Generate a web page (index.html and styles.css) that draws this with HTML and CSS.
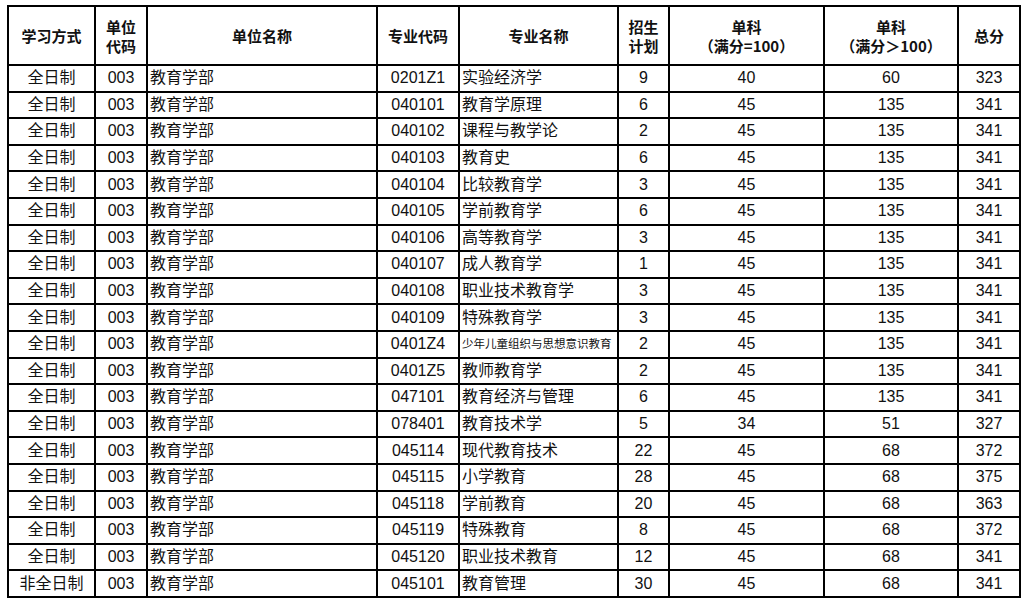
FILE: index.html
```html
<!DOCTYPE html>
<html lang="zh">
<head>
<meta charset="utf-8">
<link rel="stylesheet" href="styles.css">
</head>
<body>
<table class="grid">
<colgroup>
<col class="c1"><col class="c2"><col class="c3"><col class="c4"><col class="c5"><col class="c6"><col class="c7"><col class="c8"><col class="c9">
</colgroup>
<thead>
<tr class="head">
<th>学习方式</th><th><span class="ln">单位</span><span class="ln">代码</span></th><th>单位名称</th><th>专业代码</th><th>专业名称</th><th><span class="ln">招生</span><span class="ln">计划</span></th><th><span class="ln">单科</span><span class="ln">（满分=100）</span></th><th><span class="ln">单科</span><span class="ln">（满分＞100）</span></th><th>总分</th>
</tr>
</thead>
<tbody>
<tr><td>全日制</td><td>003</td><td class="l">教育学部</td><td>0201Z1</td><td class="l">实验经济学</td><td>9</td><td>40</td><td>60</td><td>323</td></tr>
<tr><td>全日制</td><td>003</td><td class="l">教育学部</td><td>040101</td><td class="l">教育学原理</td><td>6</td><td>45</td><td>135</td><td>341</td></tr>
<tr><td>全日制</td><td>003</td><td class="l">教育学部</td><td>040102</td><td class="l">课程与教学论</td><td>2</td><td>45</td><td>135</td><td>341</td></tr>
<tr><td>全日制</td><td>003</td><td class="l">教育学部</td><td>040103</td><td class="l">教育史</td><td>6</td><td>45</td><td>135</td><td>341</td></tr>
<tr><td>全日制</td><td>003</td><td class="l">教育学部</td><td>040104</td><td class="l">比较教育学</td><td>3</td><td>45</td><td>135</td><td>341</td></tr>
<tr><td>全日制</td><td>003</td><td class="l">教育学部</td><td>040105</td><td class="l">学前教育学</td><td>6</td><td>45</td><td>135</td><td>341</td></tr>
<tr><td>全日制</td><td>003</td><td class="l">教育学部</td><td>040106</td><td class="l">高等教育学</td><td>3</td><td>45</td><td>135</td><td>341</td></tr>
<tr><td>全日制</td><td>003</td><td class="l">教育学部</td><td>040107</td><td class="l">成人教育学</td><td>1</td><td>45</td><td>135</td><td>341</td></tr>
<tr><td>全日制</td><td>003</td><td class="l">教育学部</td><td>040108</td><td class="l">职业技术教育学</td><td>3</td><td>45</td><td>135</td><td>341</td></tr>
<tr><td>全日制</td><td>003</td><td class="l">教育学部</td><td>040109</td><td class="l">特殊教育学</td><td>3</td><td>45</td><td>135</td><td>341</td></tr>
<tr><td>全日制</td><td>003</td><td class="l">教育学部</td><td>0401Z4</td><td class="l small">少年儿童组织与思想意识教育</td><td>2</td><td>45</td><td>135</td><td>341</td></tr>
<tr><td>全日制</td><td>003</td><td class="l">教育学部</td><td>0401Z5</td><td class="l">教师教育学</td><td>2</td><td>45</td><td>135</td><td>341</td></tr>
<tr><td>全日制</td><td>003</td><td class="l">教育学部</td><td>047101</td><td class="l">教育经济与管理</td><td>6</td><td>45</td><td>135</td><td>341</td></tr>
<tr><td>全日制</td><td>003</td><td class="l">教育学部</td><td>078401</td><td class="l">教育技术学</td><td>5</td><td>34</td><td>51</td><td>327</td></tr>
<tr><td>全日制</td><td>003</td><td class="l">教育学部</td><td>045114</td><td class="l">现代教育技术</td><td>22</td><td>45</td><td>68</td><td>372</td></tr>
<tr><td>全日制</td><td>003</td><td class="l">教育学部</td><td>045115</td><td class="l">小学教育</td><td>28</td><td>45</td><td>68</td><td>375</td></tr>
<tr><td>全日制</td><td>003</td><td class="l">教育学部</td><td>045118</td><td class="l">学前教育</td><td>20</td><td>45</td><td>68</td><td>363</td></tr>
<tr><td>全日制</td><td>003</td><td class="l">教育学部</td><td>045119</td><td class="l">特殊教育</td><td>8</td><td>45</td><td>68</td><td>372</td></tr>
<tr><td>全日制</td><td>003</td><td class="l">教育学部</td><td>045120</td><td class="l">职业技术教育</td><td>12</td><td>45</td><td>68</td><td>341</td></tr>
<tr><td>非全日制</td><td>003</td><td class="l">教育学部</td><td>045101</td><td class="l">教育管理</td><td>30</td><td>45</td><td>68</td><td>341</td></tr>
</tbody>
</table>
</body>
</html>
```
FILE: styles.css
```css
html, body {
  margin: 0;
  padding: 0;
  background: #ffffff;
}
body {
  font-family: "Liberation Sans", "Noto Sans CJK SC", sans-serif;
  color: #111111;
}
.grid {
  margin: 5px 0 0 7px;
  border-collapse: collapse;
  table-layout: fixed;
  width: 1013px;
  font-size: 16px;
}
.c1 { width: 87px; }
.c2 { width: 52px; }
.c3 { width: 230px; }
.c4 { width: 82px; }
.c5 { width: 159px; }
.c6 { width: 51px; }
.c7 { width: 155px; }
.c8 { width: 134px; }
.c9 { width: 62px; }
.grid th, .grid td {
  border: 2px solid #000000;
  padding: 0 2px;
  text-align: center;
  vertical-align: middle;
  white-space: nowrap;
  overflow: hidden;
}
.grid th {
  height: 57px;
  font-weight: bold;
  line-height: 19px;
  font-family: "Noto Sans CJK SC", "Liberation Sans", sans-serif;
  font-size: 15px;
}
.grid th .ln {
  display: block;
  height: 19px;
  line-height: 19px;
}
.grid td {
  height: 24.6px;
  line-height: 18px;
}
.grid td.l {
  text-align: left;
}
.grid td.small {
  font-size: 11.5px;
}
```
